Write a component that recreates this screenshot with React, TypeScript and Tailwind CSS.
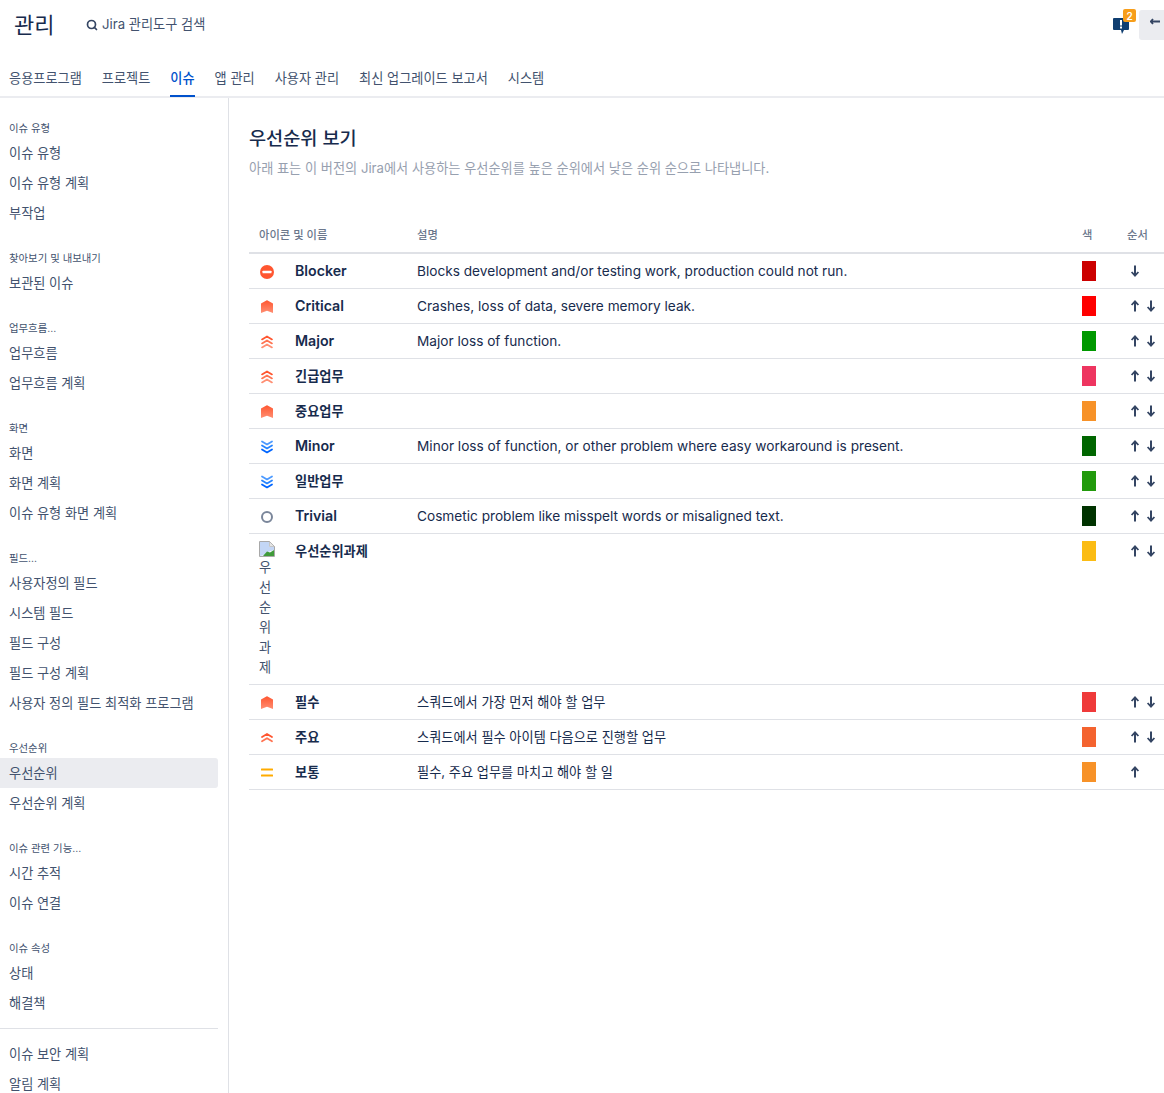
import { Search } from 'lucide-react'

const sans = "font-['Inter','Noto_Sans_CJK_KR','Noto_Sans',sans-serif]"

const tabs = ['응용프로그램', '프로젝트', '이슈', '앱 관리', '사용자 관리', '최신 업그레이드 보고서', '시스템']

const groups = [
    { title: '이슈 유형', items: ['이슈 유형', '이슈 유형 계획', '부작업'] },
    { title: '찾아보기 및 내보내기', items: ['보관된 이슈'] },
    { title: '업무흐름...', items: ['업무흐름', '업무흐름 계획'] },
    { title: '화면', items: ['화면', '화면 계획', '이슈 유형 화면 계획'] },
    { title: '필드...', items: ['사용자정의 필드', '시스템 필드', '필드 구성', '필드 구성 계획', '사용자 정의 필드 최적화 프로그램'] },
    { title: '우선순위', items: ['우선순위', '우선순위 계획'] },
    { title: '이슈 관련 기능...', items: ['시간 추적', '이슈 연결'] },
    { title: '이슈 속성', items: ['상태', '해결책'] },
]

type IconKind = 'blocker' | 'critical' | 'major' | 'minor' | 'trivial' | 'broken' | 'high' | 'medium'

const priorities: { icon: IconKind; name: string; desc: string; color: string; up: boolean; down: boolean }[] = [
    { icon: 'blocker', name: 'Blocker', desc: 'Blocks development and/or testing work, production could not run.', color: 'bg-[#cc0000]', up: false, down: true },
    { icon: 'critical', name: 'Critical', desc: 'Crashes, loss of data, severe memory leak.', color: 'bg-[#ff0000]', up: true, down: true },
    { icon: 'major', name: 'Major', desc: 'Major loss of function.', color: 'bg-[#009900]', up: true, down: true },
    { icon: 'major', name: '긴급업무', desc: '', color: 'bg-[#ee3560]', up: true, down: true },
    { icon: 'critical', name: '중요업무', desc: '', color: 'bg-[#f79228]', up: true, down: true },
    { icon: 'minor', name: 'Minor', desc: 'Minor loss of function, or other problem where easy workaround is present.', color: 'bg-[#006600]', up: true, down: true },
    { icon: 'minor', name: '일반업무', desc: '', color: 'bg-[#229a0c]', up: true, down: true },
    { icon: 'trivial', name: 'Trivial', desc: 'Cosmetic problem like misspelt words or misaligned text.', color: 'bg-[#003300]', up: true, down: true },
    { icon: 'broken', name: '우선순위과제', desc: '', color: 'bg-[#fbbc14]', up: true, down: true },
    { icon: 'critical', name: '필수', desc: '스쿼드에서 가장 먼저 해야 할 업무', color: 'bg-[#ef3a3a]', up: true, down: true },
    { icon: 'high', name: '주요', desc: '스쿼드에서 필수 아이템 다음으로 진행할 업무', color: 'bg-[#f4632f]', up: true, down: true },
    { icon: 'medium', name: '보통', desc: '필수, 주요 업무를 마치고 해야 할 일', color: 'bg-[#f79228]', up: true, down: false },
]

const isKorean = (s: string) => /[가-힣]/.test(s)

function Chevrons({ ys, colors, down = false }: { ys: number[]; colors: string[]; down?: boolean }) {
    return (
        <svg width="16" height="16" viewBox="0 0 16 16" fill="none" className="mt-[3px] block">
            {ys.map((y, i) => (
                <path
                    key={y}
                    d={down ? `M3 ${y}L8 ${y + 3}L13 ${y}` : `M3 ${y + 3}L8 ${y}L13 ${y + 3}`}
                    stroke={colors[i]}
                    strokeWidth="1.8"
                    strokeLinecap="round"
                    strokeLinejoin="round"
                />
            ))}
        </svg>
    )
}

function PriorityIcon({ kind, id }: { kind: IconKind; id: string }) {
    if (kind === 'blocker') {
        return (
            <svg width="16" height="16" viewBox="0 0 16 16" className="mt-[3px] block">
                <circle cx="8" cy="8" r="7" fill="#ff5630" />
                <rect x="3.5" y="6.7" width="9" height="2.6" rx="0.6" fill="#fff" />
            </svg>
        )
    }
    if (kind === 'critical') {
        return (
            <svg width="16" height="16" viewBox="0 0 16 16" className="mt-[3px] block">
                <defs>
                    <linearGradient id={id} x1="0" y1="0" x2="0" y2="1">
                        <stop offset="0" stopColor="#ff5630" />
                        <stop offset="1" stopColor="#ff8f73" />
                    </linearGradient>
                </defs>
                <path d="M2 4.6 7.4 1.5a1.2 1.2 0 0 1 1.2 0L14 4.6V14L8 11.8 2 14Z" fill={`url(#${id})`} />
            </svg>
        )
    }
    if (kind === 'major') return <Chevrons ys={[2.4, 6.4, 10.4]} colors={['#ff5630', '#ff7452', '#ff8f73']} />
    if (kind === 'high') return <Chevrons ys={[4, 8.2]} colors={['#ff5630', '#ff7452']} />
    if (kind === 'minor') return <Chevrons down ys={[2.4, 6.4, 10.4]} colors={['#4c9aff', '#2684ff', '#0065ff']} />
    if (kind === 'medium') {
        return (
            <svg width="16" height="16" viewBox="0 0 16 16" className="mt-[3px] block">
                <rect x="2" y="3.5" width="12" height="2" rx="0.5" fill="#ffab00" />
                <rect x="2" y="9.6" width="12" height="2" rx="0.5" fill="#ffab00" />
            </svg>
        )
    }
    return (
        <svg width="16" height="16" viewBox="0 0 16 16" fill="none" className="mt-[3px] block">
            <circle cx="8" cy="8" r="5" stroke="#7a869a" strokeWidth="2" />
        </svg>
    )
}

function BrokenImage() {
    return (
        <svg width="16" height="16" viewBox="0 0 16 16" className="block">
            <path d="M0.5 0.5H10.5L15.5 5.5V15.5H0.5Z" fill="#fff" stroke="#a8a8a8" />
            <path d="M1 1H10V6H15V9L9 11 6 14 1 15Z" fill="#c3d6f5" />
            <path d="M4 15 8 10.5l3 1 4-2.5v6H4Z" fill="#3f9a3a" />
            <path d="M10.5 0.5V5.5H15.5Z" fill="#e4e4e4" stroke="#a8a8a8" strokeWidth="0.6" />
        </svg>
    )
}

function SortArrow({ dir }: { dir: 'up' | 'down' }) {
    return (
        <svg width="10" height="12" viewBox="0 0 10 12" fill="none" className={`block ${dir === 'down' ? 'rotate-180' : ''}`}>
            <path d="M5 1.5V11.5" stroke="#344563" strokeWidth="2" />
            <path d="M1.6 5 5 1.4 8.4 5" stroke="#344563" strokeWidth="1.8" />
        </svg>
    )
}

function Sidebar() {
    return (
        <aside className="w-[229px] shrink-0 border-r border-[#dfe1e6] pt-5 pr-[10px]">
            {groups.map((g) => (
                <div key={g.title} className="mb-5">
                    <div className="flex h-5 items-center pt-[2px] pl-[9px] text-[10.4px] text-[#42526e]">{g.title}</div>
                    {g.items.map((item) => (
                        <div
                            key={item}
                            className={`flex h-[30px] items-center rounded-r-[3px] pt-[2px] pl-[9px] text-[13.2px] text-[#42526e] ${
                                item === '우선순위' ? 'bg-[#ebecf0]' : ''
                            }`}
                        >
                            {item}
                        </div>
                    ))}
                </div>
            ))}
            <div className="-mt-[10px] mb-[10px] border-t border-[#dfe1e6]" />
            <div className="flex h-[30px] items-center pt-[2px] pl-[9px] text-[13.2px] text-[#42526e]">이슈 보안 계획</div>
            <div className="flex h-[30px] items-center pt-[2px] pl-[9px] text-[13.2px] text-[#42526e]">알림 계획</div>
        </aside>
    )
}

function PriorityTable() {
    return (
        <table className="w-full table-fixed border-separate border-spacing-0 text-left">
            <colgroup>
                <col className="w-[46px]" />
                <col className="w-[122px]" />
                <col />
                <col className="w-[45px]" />
                <col className="w-[37px]" />
            </colgroup>
            <thead>
                <tr className="text-[11.3px] text-[#6b778c]">
                    <th colSpan={2} className="border-b-2 border-[#dfe1e6] pt-[9px] pb-[7px] pl-[10px] font-medium leading-5">아이콘 및 이름</th>
                    <th className="border-b-2 border-[#dfe1e6] pt-[9px] pb-[7px] font-medium leading-5">설명</th>
                    <th className="border-b-2 border-[#dfe1e6] pt-[9px] pb-[7px] font-medium leading-5">색</th>
                    <th className="border-b-2 border-[#dfe1e6] pt-[9px] pb-[7px] font-medium leading-5">순서</th>
                </tr>
            </thead>
            <tbody>
                {priorities.map((p, i) => (
                    <tr key={p.name} className="align-top leading-5 text-[#172b4d]">
                        <td className="border-b border-[#dfe1e6] py-[7px] pl-[10px]">
                            {p.icon === 'broken' ? (
                                <div className="w-4 text-[#42526e]">
                                    <BrokenImage />
                                    <div className="break-all text-[13.2px]">우선순위과제</div>
                                </div>
                            ) : (
                                <PriorityIcon kind={p.icon} id={`crit-${i}`} />
                            )}
                        </td>
                        <td className={`border-b border-[#dfe1e6] py-[7px] font-semibold whitespace-nowrap ${isKorean(p.name) ? 'text-[13.2px]' : 'text-[14.2px]'}`}>
                            {p.name}
                        </td>
                        <td className={`border-b border-[#dfe1e6] py-[7px] ${isKorean(p.desc) ? 'text-[13.2px]' : 'text-[13.65px]'}`}>{p.desc}</td>
                        <td className="border-b border-[#dfe1e6] py-[7px]">
                            <div className={`h-5 w-[14px] ${p.color}`} />
                        </td>
                        <td className="border-b border-[#dfe1e6] py-[7px]">
                            <div className="flex items-center gap-[6px] pt-[4px] pl-[3px]">
                                {p.up && <SortArrow dir="up" />}
                                {p.down && <SortArrow dir="down" />}
                            </div>
                        </td>
                    </tr>
                ))}
            </tbody>
        </table>
    )
}

export default function App() {
    return (
        <div className={`h-[1093px] overflow-hidden bg-white ${sans}`}>
            <header className="border-b-2 border-[#ebecf0]">
                <div className="flex h-[50px] items-center">
                    <h1 className="w-[86px] pl-[14px] text-[22px] leading-7 font-normal text-[#172b4d]">관리</h1>
                    <Search size={12} strokeWidth={3.4} className="mb-[1px] text-[#344563]" />
                    <span className="ml-1 text-[13.2px] text-[#42526e]">Jira 관리도구 검색</span>
                    <div className="relative ml-auto flex items-center">
                        <svg width="16" height="17" viewBox="0 0 16 17" className="mt-[3px] mr-[10px] block">
                            <path d="M1 0h14a1 1 0 0 1 1 1v10a1 1 0 0 1-1 1h-4l-2 4-1-4H1a1 1 0 0 1-1-1V1a1 1 0 0 1 1-1Z" fill="#0f3e70" />
                            <rect x="7" y="2" width="2" height="5.5" fill="#fff" />
                            <rect x="7" y="8.5" width="2" height="2" fill="#fff" />
                        </svg>
                        <span className="absolute top-[-1px] left-[10px] flex h-[13px] w-[13px] items-center justify-center rounded-[2px] bg-[#f79e1b] text-[10px] leading-none font-semibold text-white">2</span>
                        <div className="flex h-[30px] w-[25px] items-center justify-end rounded-l-[3px] bg-[#ebecf0] pr-[4px] pb-[7px]">
                            <svg width="10" height="8" viewBox="0 0 10 8" fill="none">
                                <path d="M0.5 3.5h9.5M3 1 .8 3.5 3 6" stroke="#344563" strokeWidth="1.8" />
                            </svg>
                        </div>
                    </div>
                </div>
                <nav className="flex h-[46px] gap-5 pl-[9px]">
                    {tabs.map((t) => (
                        <a
                            key={t}
                            className={`-mb-[1px] flex items-center border-b-2 pt-[13px] text-[13.2px] ${
                                t === '이슈' ? 'border-[#0052cc] font-medium text-[#0052cc]' : 'border-transparent text-[#42526e]'
                            }`}
                        >
                            {t}
                        </a>
                    ))}
                </nav>
            </header>
            <div className="flex">
                <Sidebar />
                <main className="min-w-0 flex-1 pt-[26px] pl-5">
                    <h2 className="text-[18.6px] leading-7 font-medium text-[#172b4d]">우선순위 보기</h2>
                    <p className="mt-[6px] mb-[38px] text-[13.2px] leading-5 text-[#97a0af]">
                        아래 표는 이 버전의 Jira에서 사용하는 우선순위를 높은 순위에서 낮은 순위 순으로 나타냅니다.
                    </p>
                    <PriorityTable />
                </main>
            </div>
        </div>
    )
}
